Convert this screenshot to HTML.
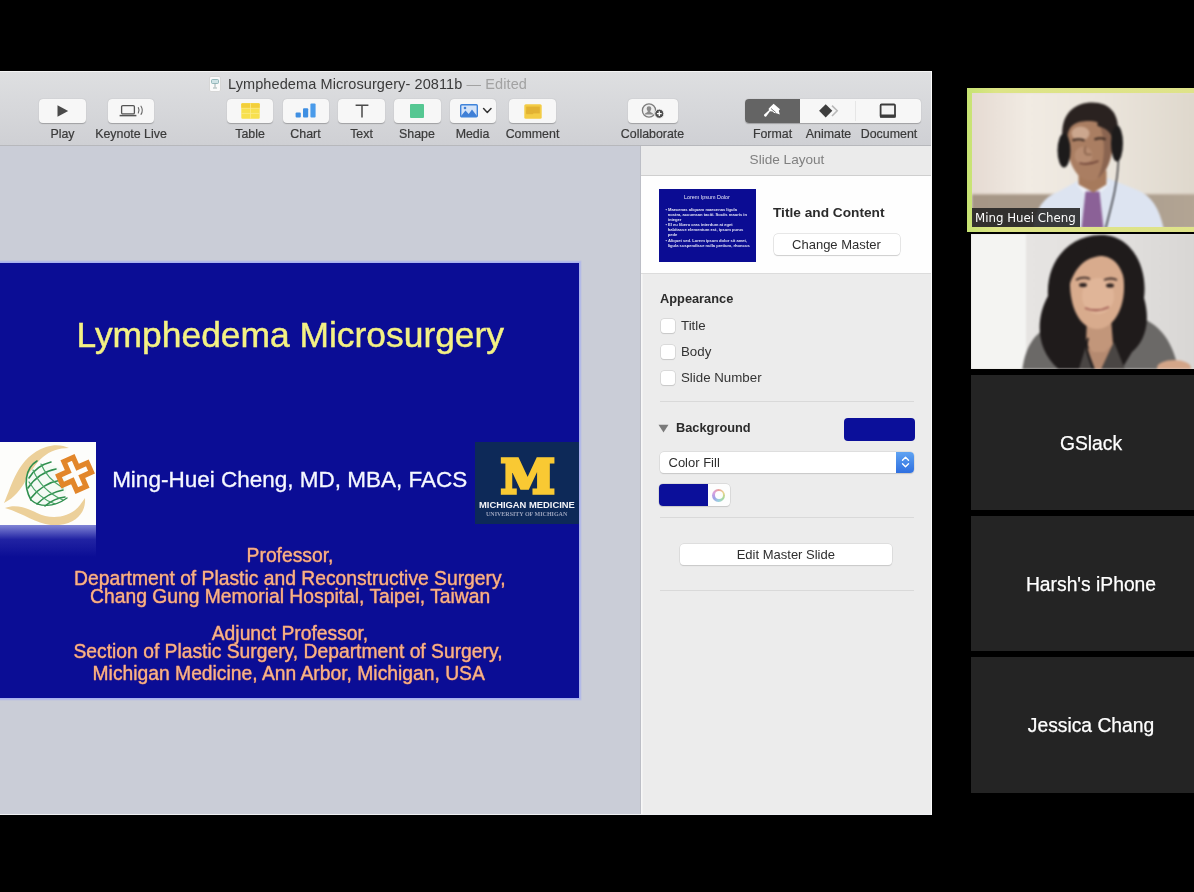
<!DOCTYPE html>
<html lang="en">
<head>
<meta charset="utf-8">
<title>Lymphedema Microsurgery</title>
<style>
*{box-sizing:border-box;margin:0;padding:0}
html,body{width:1194px;height:892px;overflow:hidden;background:#000}
body{position:relative;font-family:"Liberation Sans",sans-serif;color:#333;will-change:transform}
.abs{position:absolute}
/* keynote window */
#kn{position:absolute;left:0;top:71px;width:931.5px;height:743.8px;background:#cacdd7;overflow:hidden;border-right:1.5px solid #fbfbfb;border-bottom:1.3px solid #f0f1f4}
#tb{position:absolute;left:0;top:0;width:932px;height:75px;background:linear-gradient(#dedfe1,#cfd0d4);border-bottom:1px solid #b7b8bc;border-top:1px solid #f4f4f4}
.ttl{position:absolute;left:228px;top:3.5px;font-size:14.5px;line-height:17px;color:#3a3a3a;white-space:nowrap;letter-spacing:.1px}
.ttl span{color:#a2a2a2}
.btn{position:absolute;top:27px;height:24px;background:#f7f7f7;border-radius:4px;box-shadow:0 .5px 1px rgba(0,0,0,.25)}
.lbl{position:absolute;top:55px;font-size:12.4px;-webkit-text-stroke:.2px #3a3a3a;line-height:14px;color:#3a3a3a;text-align:center;white-space:nowrap;transform:translateX(-50%)}
/* right panel */
#rp{position:absolute;left:640px;top:75px;width:292px;height:669px;background:#ececec;border-left:1px solid #bcbec6;box-shadow:inset 1.5px 0 0 #f7f7f7}
#rph{position:absolute;left:0;top:0;width:292px;height:30px;background:#ebebeb;border-bottom:1px solid #cfcfcf;text-align:center;font-size:13.6px;line-height:28px;color:#808080}
#rpw{position:absolute;left:0;top:30px;width:292px;height:98px;background:#fefefe;border-bottom:1px solid #dcdcdc}
.b{font-weight:bold;color:#2b2b2b;font-size:12.8px;white-space:nowrap}
.cb{position:absolute;left:20px;width:14px;height:14px;background:#fff;border-radius:3px;box-shadow:0 0 0 .5px #c8c8c8,0 1px 1px rgba(0,0,0,.15)}
.cl{position:absolute;left:40px;font-size:13.3px;line-height:16px;color:#333;white-space:nowrap}
.sep{position:absolute;left:19px;width:254px;height:1px;background:#d9d9d9}
.pbtn{position:absolute;background:#fff;border-radius:4px;box-shadow:0 0 0 .5px #d0d0d0,0 1px 1px rgba(0,0,0,.18);font-size:13px;color:#2e2e2e;text-align:center;white-space:nowrap}
.thb{font-size:4.1px;line-height:5px;color:#e4e4f6;white-space:nowrap;font-weight:bold}
/* slide */
#sl{position:absolute;left:-1px;top:192px;width:580px;height:435px;background:#0b0d95;box-shadow:0 0 0 1.5px #a9b1ee,0 0 0 2.5px rgba(169,177,238,.4);overflow:hidden}
.st{position:absolute;white-space:nowrap;transform:translateX(-50%);text-align:center}
.o{font-size:19.3px;line-height:24px;color:#f5b48c;text-shadow:0 0 1px #d8603c;-webkit-text-stroke:.3px #f0a47c}
/* tiles */
.tile{position:absolute;left:971px;width:240px;height:135px;background:#242424;color:#fff;font-size:19.3px;text-align:center;line-height:137px;white-space:nowrap;-webkit-text-stroke:.25px #fff;overflow:hidden}
</style>
</head>
<body>
<div id="kn">
  <div id="tb">
    <svg class="abs" style="left:209px;top:4px" width="12" height="16" viewBox="0 0 12 16"><rect x=".5" y=".5" width="11" height="15" rx="1.5" fill="#fafafa" stroke="#d6d6d6"/><rect x="2.5" y="3.5" width="7" height="4" rx="1" fill="#cfe3e6" stroke="#7fa9ad" stroke-width=".8"/><path d="M6 7.5v4M4 12h4" stroke="#9aa" stroke-width=".9" fill="none"/></svg>
    <div class="ttl">Lymphedema Microsurgery- 20811b <span>— Edited</span></div>
    <!-- Play -->
    <div class="btn" style="left:39px;width:47px"><svg class="abs" style="left:17px;top:5px" width="14" height="14" viewBox="0 0 14 14"><path d="M1.5 1.2L12.2 7 1.5 12.8z" fill="#4a4a4a"/></svg></div>
    <div class="lbl" style="left:62.5px">Play</div>
    <!-- Keynote Live -->
    <div class="btn" style="left:108px;width:46px"><svg class="abs" style="left:11px;top:5px" width="28" height="14" viewBox="0 0 28 14"><rect x="2.6" y="1.6" width="12.8" height="8.3" rx="1.2" fill="none" stroke="#555" stroke-width="1.3"/><path d="M.6 11.6h16.8" stroke="#555" stroke-width="1.5"/><path d="M19.3 3.6q1.6 2.6 0 5.4M22 2.2q2.6 4 0 8.2" fill="none" stroke="#666" stroke-width="1.1" stroke-linecap="round"/></svg></div>
    <div class="lbl" style="left:131px">Keynote Live</div>
    <!-- Table -->
    <div class="btn" style="left:227px;width:46px"><svg class="abs" style="left:14px;top:4px" width="19" height="16" viewBox="0 0 19 16"><rect x=".3" y=".3" width="18.4" height="15.4" rx="1" fill="#f7e04e"/><rect x=".3" y=".3" width="18.4" height="5" rx="1" fill="#f3cf3a"/><path d="M9.5 .3v15.4M.3 5.3h18.4M.3 10.4h18.4" stroke="#fbeb8a" stroke-width=".8"/></svg></div>
    <div class="lbl" style="left:250px">Table</div>
    <!-- Chart -->
    <div class="btn" style="left:282.5px;width:46.5px"><svg class="abs" style="left:12.5px;top:4px" width="22" height="16" viewBox="0 0 22 16"><rect x=".6" y="9.6" width="5.2" height="5" rx="1" fill="#3f8fe2"/><rect x="8" y="5.2" width="5.2" height="9.4" rx="1" fill="#3f8fe2"/><rect x="15.4" y=".6" width="5.2" height="14" rx="1" fill="#4a9bea"/></svg></div>
    <div class="lbl" style="left:305.5px">Chart</div>
    <!-- Text -->
    <div class="btn" style="left:338px;width:47px"><svg class="abs" style="left:17px;top:5px" width="14" height="14" viewBox="0 0 14 14"><path d="M.6 1.2h12.8M7 1.2v12.2" stroke="#4a4a4a" stroke-width="1.5" fill="none"/></svg></div>
    <div class="lbl" style="left:361.5px">Text</div>
    <!-- Shape -->
    <div class="btn" style="left:394px;width:46.5px"><div class="abs" style="left:16.3px;top:4.5px;width:14px;height:14px;background:#55c792;border-radius:1px"></div></div>
    <div class="lbl" style="left:417px">Shape</div>
    <!-- Media -->
    <div class="btn" style="left:450px;width:46px"><svg class="abs" style="left:10px;top:5px" width="32" height="14" viewBox="0 0 32 14"><rect x=".7" y=".7" width="16.6" height="12" rx="1" fill="#d3e3f8" stroke="#3f83da" stroke-width="1.4"/><path d="M1 12l4.5-5.5 3.2 3.4 3.3-4.4 5 6.5z" fill="#3f7fd6"/><circle cx="5" cy="4" r="1.3" fill="#3f7fd6"/><path d="M23.6 4.6l3.7 3.8 3.7-3.8" fill="none" stroke="#333" stroke-width="1.5" stroke-linecap="round" stroke-linejoin="round"/></svg></div>
    <div class="lbl" style="left:472.5px">Media</div>
    <!-- Comment -->
    <div class="btn" style="left:509px;width:47px"><svg class="abs" style="left:15px;top:4.5px" width="18" height="15" viewBox="0 0 18 15"><rect x=".3" y=".3" width="17.4" height="14.4" rx="1.5" fill="#f3cc45"/><rect x="2.2" y="2.6" width="13.6" height="6.8" fill="#e2b233"/><rect x="2.2" y="6.6" width="7" height="3.6" fill="#e2b233"/></svg></div>
    <div class="lbl" style="left:532.5px">Comment</div>
    <!-- Collaborate -->
    <div class="btn" style="left:628px;width:50px"><svg class="abs" style="left:13px;top:3px" width="24" height="18" viewBox="0 0 24 18"><circle cx="8" cy="8.5" r="6.6" fill="#ededed" stroke="#7d7d7d" stroke-width="1.3"/><path d="M8 4.2a2.3 2.3 0 0 1 2.3 2.4c0 1.3-.6 2-1 2.5-.3.5 0 1 .8 1.3 1.2.4 2 .9 2.2 2H3.7c.2-1.1 1-1.6 2.2-2 .8-.3 1.1-.8.8-1.3-.4-.5-1-1.2-1-2.5A2.3 2.3 0 0 1 8 4.2z" fill="#8a8a8a"/><circle cx="18.3" cy="11.7" r="4.6" fill="#4d4d4d" stroke="#f4f4f4" stroke-width="1"/><path d="M18.3 9.3v4.800M15.900 11.700h4.800" stroke="#fff" stroke-width="1.3"/></svg></div>
    <div class="lbl" style="left:652.5px">Collaborate</div>
    <!-- Format / Animate / Document -->
    <div class="btn" style="left:744.5px;width:176px;overflow:hidden">
      <div class="abs" style="left:0;top:0;width:55.5px;height:24px;background:#646464"></div>
      <div class="abs" style="left:110.5px;top:2px;width:1px;height:20px;background:#e6e6e6"></div>
      <svg class="abs" style="left:19px;top:4px" width="18" height="17" viewBox="0 0 18 17"><path d="M9.6 .8l6.400 5.400-1.200 1.600 1 3.800-3.400-1.400-2.200-.2-1.600-1.600L6 8.200l-3.800 5.400a1.500 1.500 0 0 1-2-2L5 7.200 4.600 5.800 6 4.200z" fill="#fff"/><path d="M7 5.500l4.800 4" stroke="#646464" stroke-width=".9"/></svg>
      <svg class="abs" style="left:72px;top:4px" width="24" height="16" viewBox="0 0 24 16"><path d="M8.7 1.200l6.600 6.600-6.600 6.600L2.100 7.800z" fill="#3e3e3e"/><path d="M15 2.600l5.200 5.200-5.200 5.200" fill="none" stroke="#b9b9b9" stroke-width="1.6"/></svg>
      <svg class="abs" style="left:133px;top:4px" width="20" height="16" viewBox="0 0 20 16"><rect x="2.6" y="1.500" width="14.400" height="12.400" rx="1" fill="#f3f3f3" stroke="#3c3c3c" stroke-width="1.8"/><rect x="2" y="11.500" width="15.600" height="3" fill="#3c3c3c"/></svg>
    </div>
    <div class="lbl" style="left:772.5px">Format</div>
    <div class="lbl" style="left:828.5px">Animate</div>
    <div class="lbl" style="left:889px">Document</div>
  </div>
  <div id="sl">
    <div class="st" id="t1" style="left:291.3px;top:49.9px;font-size:35.4px;line-height:44px;color:#f4f184;-webkit-text-stroke:.45px #f4f184">Lymphedema Microsurgery</div>
    <!-- left logo -->
    <div class="abs" style="left:0;top:179px;width:97px;height:83px;background:#fdfdfb"></div>
    <div class="abs" style="left:0;top:262px;width:97px;height:32px;background:linear-gradient(rgba(150,155,225,.85),rgba(60,62,180,.45) 45%,rgba(12,12,146,0))"></div>
    <svg class="abs" style="left:0;top:179px" width="98" height="83" viewBox="0 0 98 83">
      <path d="M5 61C13 44 18 15 47 5c9-3 17-2 23 1-10 0-19 3-26 9C28 28 27 50 5 61z" fill="#ecd09a"/>
      <path d="M6 66c11-4 22 0 32 5 14 7 33 5 43-8l5-7c1 13-7 25-26 27-19 2-31-10-54-17z" fill="#ecd09a"/>
      <circle cx="47" cy="43" r="21" fill="#f4faf4"/>
      <g fill="none" stroke="#2f8f4e" stroke-width="1.6" stroke-linecap="round">
        <path d="M38 19C26 26 24 44 32 58"/>
        <path d="M30 36c6-10 14-14 22-16M29 46c8-12 18-17 28-19M32 56c8-10 18-16 30-18M38 62c8-8 16-12 26-14M46 64c6-5 12-8 20-9"/>
        <path d="M30 40c6 10 14 18 26 22M34 28c6 14 16 24 30 30M42 22c4 10 12 18 22 24" stroke-width="1.2" stroke="#4aa567"/>
        <path d="M32 58c8 7 22 8 36-2" stroke-width="1.4"/>
      </g>
      <g transform="translate(76 32) rotate(-24) scale(.93)"><path d="M-5.5-17h11v11.5h11.5v11h-11.5v11.5h-11v-11.5h-11.5v-11h11.5z" fill="none" stroke="#e2862a" stroke-width="5.6"/></g>
    </svg>
    <div class="st" id="t2" style="left:290.7px;top:201.8px;font-size:22.5px;line-height:30px;color:#f6f8ff;-webkit-text-stroke:.3px #f6f8ff">Ming-Huei Cheng, MD, MBA, FACS</div>
    <!-- michigan -->
    <div class="abs" style="left:476px;top:179px;width:104px;height:82px;background:#0d2958">
      <div class="abs" id="bm" style="left:24px;top:13px;width:56px;height:40px;overflow:visible"><div id="bmm" style="position:absolute;left:3.5px;top:2px;font-family:'DejaVu Serif',serif;font-weight:bold;font-size:46px;line-height:36px;color:#f9c933;-webkit-text-stroke:3.2px #f9c933;paint-order:stroke fill;white-space:nowrap;transform:translate(-.7px,1.2px) scale(1.07,1.03)">M</div></div>
      <div class="abs" id="mm" style="left:4px;top:57.5px;font-size:9.4px;line-height:10px;font-weight:bold;color:#f4f4f8;white-space:nowrap;transform-origin:0 0">MICHIGAN MEDICINE</div>
      <div class="abs" id="um" style="left:11px;top:69px;font-family:'Liberation Serif',serif;font-size:6px;line-height:6px;font-weight:bold;color:#9aa3bd;white-space:nowrap;transform-origin:0 0">UNIVERSITY OF MICHIGAN</div>
    </div>
    <div class="st o" id="t3" style="left:291.0px;top:281.4px">Professor,</div>
    <div class="st o" id="t4" style="left:290.8px;top:303.9px">Department of Plastic and Reconstructive Surgery,</div>
    <div class="st o" id="t5" style="left:291.1px;top:321.6px">Chang Gung Memorial Hospital, Taipei, Taiwan</div>
    <div class="st o" id="t6" style="left:291.0px;top:358.8px">Adjunct Professor,</div>
    <div class="st o" id="t7" style="left:289.0px;top:376.5px">Section of Plastic Surgery, Department of Surgery,</div>
    <div class="st o" id="t8" style="left:289.7px;top:399.0px">Michigan Medicine, Ann Arbor, Michigan, USA</div>
  </div>
  <div id="rp">
    <div id="rph">Slide Layout</div>
    <div id="rpw">
      <div class="abs" id="th" style="left:17.5px;top:12.5px;width:97px;height:73px;background:#0b0c93;overflow:hidden">
        <div class="abs" style="left:0;top:5.5px;width:97px;text-align:center;font-size:5.4px;line-height:6px;color:#e8e8f8">Lorem Ipsum Dolor</div>
        <div class="abs thb" style="left:7px;top:18px">• Maecenas aliquam maecenas ligula<br>&nbsp;&nbsp;nostra, accumsan taciti. Sociis mauris in<br>&nbsp;&nbsp;integer</div>
        <div class="abs thb" style="left:7px;top:33.7px">• El eu libero cras interdum at eget<br>&nbsp;&nbsp;habitasse elementum est, ipsum purus<br>&nbsp;&nbsp;pede</div>
        <div class="abs thb" style="left:7px;top:49.4px">• Aliquet sed. Lorem ipsum dolor sit amet,<br>&nbsp;&nbsp;ligula suspendisse nulla pretium, rhoncus</div>
      </div>
      <div class="abs b" style="left:132px;top:29.3px;line-height:16px;font-size:13.7px">Title and Content</div>
      <div class="pbtn" style="left:132.5px;top:57.5px;width:126px;height:21px;line-height:21px">Change Master</div>
    </div>
    <div class="abs b" style="left:19px;top:145px;line-height:16px">Appearance</div>
    <div class="cb" style="top:173px"></div><div class="cl" style="top:172px">Title</div>
    <div class="cb" style="top:199px"></div><div class="cl" style="top:198px">Body</div>
    <div class="cb" style="top:224.5px"></div><div class="cl" style="top:224px">Slide Number</div>
    <div class="sep" style="top:255px"></div>
    <svg class="abs" style="left:17px;top:278px" width="11" height="9" viewBox="0 0 11 9"><path d="M.5 .8h10L5.5 8.5z" fill="#7a7a7a"/></svg>
    <div class="abs b" style="left:35px;top:274px;line-height:16px">Background</div>
    <div class="abs" style="left:202.5px;top:272px;width:71px;height:22.5px;border-radius:4px;background:#0b0f9a"></div>
    <div class="pbtn" style="left:18.5px;top:305.8px;width:254px;height:21px;line-height:21px;text-align:left;padding-left:9px;overflow:hidden">Color Fill
      <div class="abs" style="right:0;top:0;width:17.5px;height:21px;background:linear-gradient(#5fa3f2,#2f6fe0)"><svg class="abs" style="left:4.5px;top:3.5px" width="9" height="14" viewBox="0 0 9 14"><path d="M1.5 5.2L4.5 2.2l3 3M1.5 8.8l3 3 3-3" fill="none" stroke="#fff" stroke-width="1.4" stroke-linecap="round" stroke-linejoin="round"/></svg></div>
    </div>
    <div class="abs" style="left:17.5px;top:338px;width:71px;height:22px;border-radius:4px;background:#fdfdfd;box-shadow:0 0 0 .5px #c9c9c9,0 1px 1px rgba(0,0,0,.15);overflow:hidden">
      <div class="abs" style="left:0;top:0;width:49px;height:22px;background:#0b0f9a"></div>
      <div class="abs" style="left:53.5px;top:4.5px;width:13px;height:13px;border-radius:50%;background:conic-gradient(#e9a0a0,#ead48a,#a8d89a,#9ad0e0,#a0a0e8,#d8a0e0,#e9a0a0)"><div class="abs" style="left:2.5px;top:2.5px;width:8px;height:8px;border-radius:50%;background:#fdfdfd"></div></div>
    </div>
    <div class="sep" style="top:371px"></div>
    <div class="pbtn" style="left:38.6px;top:397.8px;width:212.5px;height:21px;line-height:21px">Edit Master Slide</div>
    <div class="sep" style="top:443.7px"></div>
  </div>
</div>
<!-- video tile 1 (active speaker) -->
<div class="abs" style="left:967px;top:88px;width:240px;height:143.5px;background:linear-gradient(90deg,#c6e372,#dde486 12%,#dfe38a)"></div>
<div class="abs" style="left:971.5px;top:92.5px;width:236px;height:134.5px;overflow:hidden;background:#e6ded4">
  <svg class="abs" style="left:0;top:0;filter:blur(1px)" width="236" height="135" viewBox="971.5 92.5 236 135">
    <defs>
      <linearGradient id="w1" x1="0" x2="1"><stop offset="0" stop-color="#e4d8d0"/><stop offset=".25" stop-color="#f1ebe3"/><stop offset=".55" stop-color="#ebe5dc"/><stop offset="1" stop-color="#dcd5c9"/></linearGradient>
      <linearGradient id="w1b" x1="0" x2="1"><stop offset="0" stop-color="#a69686"/><stop offset=".5" stop-color="#a89a8a"/><stop offset="1" stop-color="#b5a796"/></linearGradient>
    </defs>
    <rect x="965" y="88" width="250" height="145" fill="url(#w1)"/>
    <rect x="965" y="193.5" width="250" height="40" fill="url(#w1b)"/>
    <rect x="965" y="193" width="250" height="1.5" fill="#c9bcae"/>
    <!-- shirt -->
    <path d="M1032 232C1034 210 1042 197 1058 191L1080 179 1108 178 1138 190C1152 196 1160 210 1164 232z" fill="#dde4f1"/>
    <path d="M1076 184l8 9 16-1 9-9-6-6-22 1z" fill="#eef1f8"/>
    <!-- tie -->
    <path d="M1085 191h14l4.5 41h-23z" fill="#8b6197"/>
    <!-- neck -->
    <path d="M1078 170h28v14l-13 8-15-8z" fill="#a67a5c"/>
    <!-- hair back -->
    <path d="M1062 140C1059 112 1075 102 1092 102C1109 102 1120 113 1117 136L1113 152H1066z" fill="#2a2220"/>
    <!-- head -->
    <path d="M1067 141C1066 126 1074 121 1086 120.5C1101 120 1112 127 1112 143C1112 159 1106 172 1098 178C1092 182 1084 181 1078 175C1070 166 1067 155 1067 141z" fill="#aa7e62"/>
    <path d="M1099 124C1110 128 1113 140 1111 152C1109 164 1104 173 1097 178C1104 164 1106 142 1099 124z" fill="#8a6450"/>
    <ellipse cx="1080" cy="133" rx="9" ry="7" fill="#d2ae96" opacity=".85"/>
    <ellipse cx="1083" cy="155" rx="9" ry="9" fill="#ba9075" opacity=".8"/>
    <path d="M1097 121C1107 121 1114 127 1113 141C1110 131 1105 127 1097 125.5z" fill="#2a2220"/>
    <!-- features -->
    <path d="M1072 140q6-2.5 12 0M1094 139q6-2.5 11 0" stroke="#3c2a22" stroke-width="2.2" fill="none"/>
    <path d="M1085 146q-2 6 1 8h5" stroke="#86604a" stroke-width="1.5" fill="none"/>
    <path d="M1079 162.5q9 2.5 19-2" stroke="#6f4438" stroke-width="1.6" fill="none"/>
    <!-- headphones -->
    <ellipse cx="1063.5" cy="150" rx="6.5" ry="17" fill="#1d1b1b"/>
    <ellipse cx="1116.5" cy="143" rx="6" ry="18" fill="#1d1b1b"/>
    <path d="M1118 160C1117 185 1111 205 1104 232" stroke="#1e1e22" stroke-width="1.3" fill="none"/>
  </svg>
  <div class="abs" style="left:0;top:115px;width:108px;height:20px;background:rgba(34,34,34,.88)"></div>
  <div class="abs" id="nm" style="left:3.5px;top:117px;font-family:'DejaVu Sans','Liberation Sans',sans-serif;font-size:11.8px;line-height:16px;color:#fcfcfc;white-space:nowrap">Ming Huei Cheng</div>
</div>
<!-- video tile 2 -->
<div class="abs" style="left:971px;top:234px;width:236px;height:135px;overflow:hidden;background:#e3e1df">
  <svg class="abs" style="left:0;top:0;filter:blur(.8px)" width="236" height="135" viewBox="971 234 236 135">
    <defs>
      <linearGradient id="w2" x1="0" x2="1"><stop offset="0" stop-color="#e9e7e5"/><stop offset=".6" stop-color="#e2e0de"/><stop offset="1" stop-color="#d6d4d2"/></linearGradient>
    </defs>
    <rect x="965" y="230" width="250" height="145" fill="url(#w2)"/>
    <rect x="965" y="230" width="61" height="145" fill="#f4f4f2"/>
    <!-- shirt -->
    <path d="M1022 372C1025 345 1036 330 1056 324L1128 314C1158 320 1172 338 1179 372z" fill="#6b6967"/>
    <!-- arm -->
    <ellipse cx="1174" cy="368" rx="17" ry="8" fill="#d3a588"/>
    <!-- hair -->
    <path d="M1062 372C1034 350 1036 318 1048 296C1046 262 1068 236 1100 235C1132 234 1148 268 1144 298C1152 326 1142 344 1132 352L1120 372z" fill="#1f1b1b"/>
    <!-- neck -->
    <path d="M1087 318h24l2 26-10 16h-8l-9-18z" fill="#c2967a"/>
    <path d="M1086 346l9 24h6l12-26-8 8h-12z" fill="#b58a70"/>
    <path d="M1078 372l8-26 10 26zM1100 372l14-30 12 30z" fill="#4a4644"/>
    <!-- face -->
    <path d="M1070 286C1070 262 1082 252 1098 252C1116 252 1125 266 1124 290C1123 312 1112 329 1097 329C1082 329 1071 312 1070 286z" fill="#d8ab8d"/>
    <ellipse cx="1098" cy="296" rx="16" ry="18" fill="#e0b598"/>
    <path d="M1076 280q7-4 14-1M1104 280q7-3 13 0" stroke="#3a2a26" stroke-width="1.8" fill="none"/><ellipse cx="1083" cy="285" rx="4" ry="2" fill="#2c2220"/><ellipse cx="1110" cy="285.5" rx="4" ry="2" fill="#2c2220"/>
    <path d="M1085 308q12 5 24-1" stroke="#a05c54" stroke-width="1.8" fill="none"/>
    <!-- hair strands over forehead -->
    <path d="M1068 290C1066 262 1080 246 1100 244C1120 244 1128 262 1126 286C1122 266 1114 256 1100 256C1084 258 1074 268 1068 290z" fill="#1f1b1b"/>
    <path d="M1094 372c-4-14-10-22-6-34" stroke="#1f1b1b" stroke-width="2" fill="none"/>
  </svg>
</div>
<div class="tile" style="top:375px">GSlack</div>
<div class="tile" style="top:516px">Harsh's iPhone</div>
<div class="tile" style="top:657px;height:136px">Jessica Chang</div>
</body>
</html>
